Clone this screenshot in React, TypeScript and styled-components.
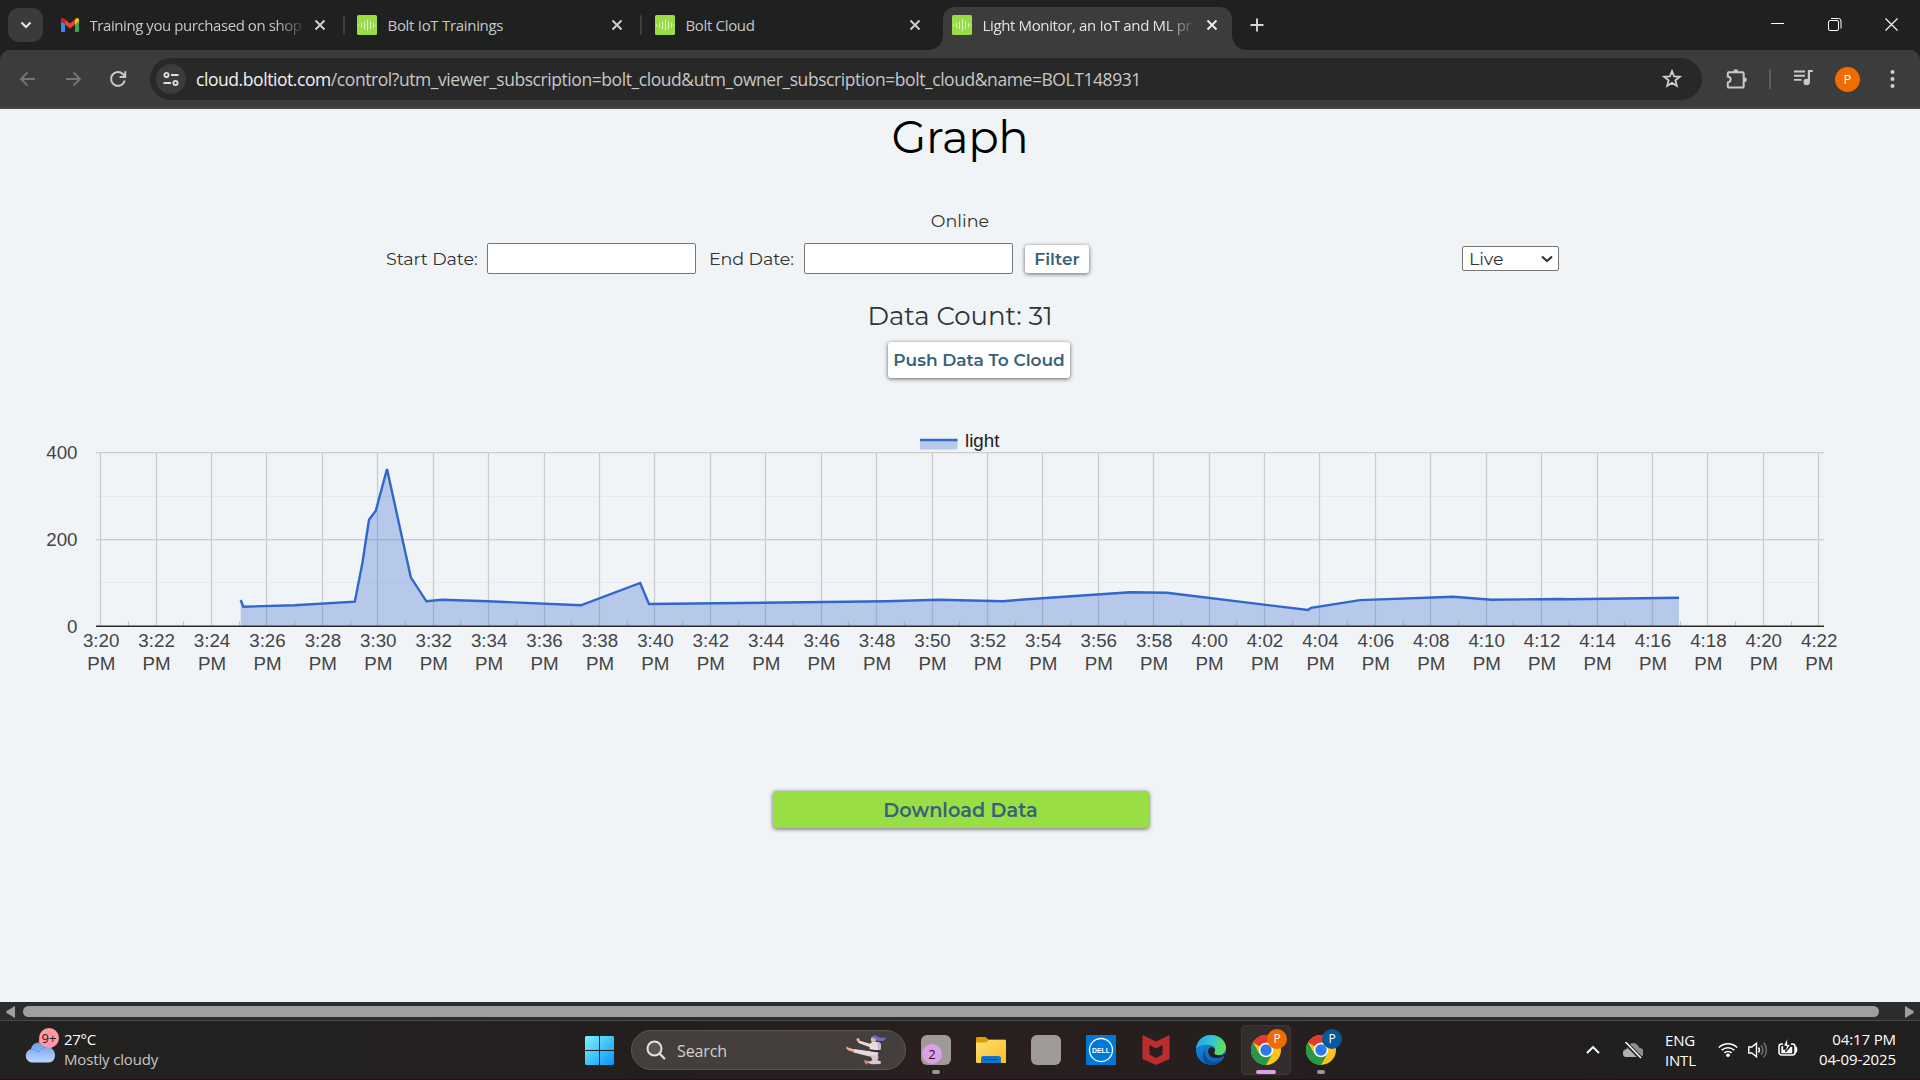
import React from "react";
import styled, { createGlobalStyle, css } from "styled-components";

const Global = createGlobalStyle`
  * { box-sizing: border-box; }
  html, body { margin: 0; padding: 0; background: #f0f4f7; overflow: hidden; }
  button, input { font-family: inherit; }
`;

const uiFont = `"Segoe UI", "Open Sans", "Noto Sans", sans-serif`;
const pageFont = `Montserrat, Inter, "Liberation Sans", sans-serif`;

const Screen = styled.div`
  width: 1920px;
  height: 1080px;
  display: flex;
  flex-direction: column;
  overflow: hidden;
  font-family: ${uiFont};
`;

/* ---------- browser tabs ---------- */
const TabStrip = styled.div`
  height: 50px;
  flex: none;
  display: flex;
  background: #1f2120;
  padding-left: 8px;
`;
const TabSearch = styled.button`
  width: 35px;
  height: 34px;
  margin-top: 8px;
  padding: 0;
  border: 0;
  border-radius: 11px;
  background: #3b3b3b;
  display: grid;
  place-items: center;
`;
const Tab = styled.div<{ $w: number; $pad?: number; $active?: boolean }>`
  position: relative;
  width: ${(p) => p.$w}px;
  height: 43px;
  margin-top: 7px;
  padding-left: ${(p) => p.$pad ?? 0}px;
  display: flex;
  align-items: center;
  padding-bottom: 7px;
  color: ${(p) => (p.$active ? "#e3e3e3" : "#c7c7c7")};
  ${(p) =>
    p.$active &&
    css`
      margin-left: 22px;
      padding-right: 14px;
      background: #3c3c3c;
      border-radius: 12px 12px 0 0;
      &::before,
      &::after {
        content: "";
        position: absolute;
        bottom: 0;
        width: 14px;
        height: 14px;
      }
      &::before {
        left: -14px;
        background: radial-gradient(circle at 0 0, transparent 13.5px, #3c3c3c 14px);
      }
      &::after {
        right: -14px;
        background: radial-gradient(circle at 100% 0, transparent 13.5px, #3c3c3c 14px);
      }
    `}
`;
const TabTitle = styled.span<{ $ls: number; $fade?: boolean }>`
  min-width: 209px;
  margin-left: 10.5px;
  white-space: nowrap;
  font-size: 15px;
  line-height: 20px;
  letter-spacing: ${(p) => p.$ls}px;
  ${(p) =>
    p.$fade &&
    css`
      mask-image: linear-gradient(90deg, #000 calc(100% - 26px), rgba(0, 0, 0, 0.15));
    `}
`;
const TabClose = styled.span`
  margin-left: auto;
  width: 12px;
  height: 12px;
  display: grid;
`;
const TabDivider = styled.span<{ $l: number; $r: number }>`
  width: 2px;
  height: 20px;
  margin: 15px ${(p) => p.$r}px 0 ${(p) => p.$l}px;
  border-radius: 1px;
  background: #3e3f3f;
`;
const NewTab = styled.span`
  display: flex;
  margin: 18px 0 0 18px;
  height: 14px;
`;
const WindowControls = styled.div`
  margin-left: auto;
  padding: 18px 22px 0 0;
  display: flex;
  gap: 43.5px;
`;

/* ---------- toolbar ---------- */
const ToolbarBack = styled.div`
  height: 59px;
  flex: none;
  background: #1f2120;
`;
const Toolbar = styled.div`
  height: 59px;
  background: #3c3c3c;
  border-radius: 10px 10px 0 0;
  border-bottom: 2px solid #484948;
  padding-top: 8px;
  display: flex;
`;
const NavButtons = styled.div`
  width: 150px;
  height: 42px;
  padding-left: 16.5px;
  display: flex;
  align-items: center;
  gap: 23px;
`;
const Omnibox = styled.div`
  width: 1552px;
  height: 42px;
  border-radius: 21px;
  background: #282828;
  display: flex;
  align-items: center;
  padding: 0 20px 0 6px;
`;
const SiteInfo = styled.span`
  width: 30px;
  height: 30px;
  border-radius: 50%;
  background: #3c3c3c;
  display: grid;
  place-items: center;
`;
const Url = styled.span`
  flex: 1;
  margin-left: 10px;
  font-size: 17.5px;
  line-height: 24px;
  letter-spacing: -0.43px;
  white-space: nowrap;
  color: #c7c7c7;
`;
const UrlHost = styled.span`
  color: #f1f1f1;
`;
const ToolbarRight = styled.div`
  flex: 1;
  height: 42px;
  padding-left: 24px;
  display: flex;
  align-items: center;
`;
const ToolDivider = styled.span`
  width: 2px;
  height: 20px;
  margin: 0 23px 0 21px;
  background: #5f5f5f;
`;
const Avatar = styled.span`
  width: 25px;
  height: 25px;
  margin: 0 30px 0 21px;
  border-radius: 50%;
  background: #ef6c00;
  color: #fff;
  font-size: 13px;
  line-height: 25px;
  text-align: center;
`;

/* ---------- page ---------- */
const Page = styled.main`
  height: 893px;
  flex: none;
  background: #f0f4f7;
  display: flex;
  flex-direction: column;
  align-items: center;
  font-family: ${pageFont};
  color: #333;
`;
const Title = styled.h1`
  margin: 0;
  height: 56px;
  font-size: 45px;
  line-height: 56px;
  font-weight: 400;
  letter-spacing: -0.3px;
  color: #000;
`;
const Status = styled.div`
  margin-top: 46px;
  height: 20px;
  font-size: 17.5px;
  line-height: 20px;
`;
const FilterRow = styled.div`
  width: 100%;
  height: 31px;
  margin-top: 12px;
  padding-left: 386px;
  display: flex;
  align-items: center;
`;
const DateLabel = styled.label<{ $w: number; $ml?: number }>`
  width: ${(p) => p.$w}px;
  margin-left: ${(p) => p.$ml ?? 0}px;
  font-size: 17.5px;
  letter-spacing: -0.1px;
  white-space: nowrap;
`;
const DateInput = styled.input`
  width: 209px;
  height: 31px;
  padding: 0 4px;
  border: 1.25px solid #767676;
  border-radius: 2px;
  background: #fff;
`;
const Raised = styled.button`
  padding: 0;
  border: 0;
  border-radius: 3px;
  background: #fff;
  color: #37637a;
  font-size: 17px;
  font-weight: 600;
  white-space: nowrap;
  box-shadow: 0 1px 4px rgba(0, 0, 0, 0.6);
`;
const FilterButton = styled(Raised)`
  width: 64px;
  height: 28px;
  margin-left: 12px;
`;
const ModeSelect = styled.div`
  width: 97px;
  height: 25px;
  margin-left: 373px;
  padding: 0 5px 0 6px;
  border: 1.25px solid #767676;
  border-radius: 2px;
  background: #fff;
  display: flex;
  align-items: center;
  justify-content: space-between;
  font-size: 17.5px;
  letter-spacing: -0.1px;
`;
const Count = styled.div`
  margin-top: 27px;
  height: 30px;
  font-size: 26px;
  line-height: 30px;
`;
const PushButton = styled(Raised)`
  width: 182px;
  height: 36px;
  margin: 11px 0 0 38px;
`;
const ChartSvg = styled.svg`
  width: 1920px;
  height: 270px;
  margin-top: 42px;
  flex: none;
  display: block;
  font-family: "Liberation Sans", Arial, sans-serif;
  font-size: 18.75px;
  fill: #444;
`;
const DownloadButton = styled(Raised)`
  width: 376px;
  height: 37px;
  margin: 101px 0 0 1px;
  background: #9ade46;
  font-size: 19.3px;
`;

/* ---------- scrollbar ---------- */
const ScrollBar = styled.div`
  height: 19px;
  flex: none;
  background: #2c2c2c;
  border-bottom: 1px solid #464646;
  display: flex;
  align-items: center;
  gap: 8px;
  padding: 1px 6px 0;
`;
const Thumb = styled.div`
  width: 1856px;
  height: 11px;
  margin-right: 18px;
  border-radius: 6px;
  background: #9f9f9f;
`;

/* ---------- taskbar ---------- */
const TaskBar = styled.footer`
  height: 59px;
  flex: none;
  display: flex;
  background: linear-gradient(90deg, #232221 0%, #242120 25%, #231f1f 33%, #291f1e 50%, #231f1e 72%, #201f20 100%);
  border-bottom: 1px solid #251018;
  color: #fff;
`;
const Weather = styled.div`
  width: 585px;
  padding: 4px 0 0 25px;
  display: flex;
  gap: 4px;
`;
const WeatherText = styled.div`
  padding-top: 4px;
  font-size: 15px;
  line-height: 20px;
  letter-spacing: -0.3px;
`;
const Dim = styled.div`
  color: #c8c6c4;
  letter-spacing: -0.15px;
`;
const StartButton = styled.div`
  width: 46px;
  padding-top: 15px;
`;
const SearchBox = styled.div`
  width: 275px;
  height: 40px;
  margin-top: 9px;
  padding: 0 17px 0 14px;
  border: 1px solid #5a5552;
  border-radius: 20px;
  background: #443f3d;
  display: flex;
  align-items: center;
  font-size: 16px;
  letter-spacing: -0.1px;
  color: #d4d0ce;
`;
const SearchLabel = styled.span`
  flex: 1;
  margin-left: 11px;
  padding-top: 1px;
`;
const Apps = styled.div`
  display: flex;
  gap: 5px;
  padding: 4px 0 0 5px;
`;
const AppCell = styled.div<{ $active?: boolean }>`
  position: relative;
  width: 50px;
  height: 50px;
  display: grid;
  place-items: center;
  border-radius: 5px;
  ${(p) =>
    p.$active &&
    css`
      background: #332e2d;
      box-shadow: inset 0 0 0 1px #3e3938;
    `}
`;
const Indicator = styled.span<{ $active?: boolean }>`
  position: absolute;
  bottom: 1px;
  left: ${(p) => (p.$active ? 15 : 21)}px;
  width: ${(p) => (p.$active ? 20 : 8)}px;
  height: 4px;
  border-radius: 2px;
  background: ${(p) => (p.$active ? "#dba0e6" : "#9c9794")};
`;
const Badge = styled.span<{ $x: number; $y: number; $bg: string; $fg: string; $size?: number }>`
  position: absolute;
  left: ${(p) => p.$x}px;
  top: ${(p) => p.$y}px;
  width: 20px;
  height: 20px;
  border-radius: 50%;
  background: ${(p) => p.$bg};
  color: ${(p) => p.$fg};
  font-size: ${(p) => p.$size ?? 12}px;
  line-height: 20px;
  letter-spacing: 0;
  text-align: center;
`;
const WeatherIcon = styled.div`
  position: relative;
  width: 35px;
  height: 42px;
  padding-top: 9px;
`;
const BlankApp = styled.div`
  width: 30px;
  height: 30px;
  border-radius: 6px;
  background: #9e9a98;
`;
const Tray = styled.div`
  margin-left: auto;
  padding-right: 24px;
  display: flex;
  align-items: flex-start;
`;
const TrayIcon = styled.span<{ $mt: number; $mr: number }>`
  display: flex;
  margin: ${(p) => p.$mt}px ${(p) => p.$mr}px 0 0;
`;
const TrayText = styled.div<{ $w: number; $mt: number; $right?: boolean }>`
  width: ${(p) => p.$w}px;
  margin-top: ${(p) => p.$mt}px;
  font-size: 15px;
  line-height: 20px;
  letter-spacing: ${(p) => (p.$right ? -0.12 : -0.2)}px;
  white-space: nowrap;
  text-align: ${(p) => (p.$right ? "right" : "left")};
`;

/* ---------- drawings ---------- */
const Cross = ({ color = "#d0d0d0" }: { color?: string }) => (
  <svg width="12" height="12" viewBox="0 0 12 12">
    <path d="M1.5 1.5l9 9M10.5 1.5l-9 9" stroke={color} strokeWidth="1.9" />
  </svg>
);

const BoltIcon = () => (
  <svg width="20" height="20" viewBox="0 0 20 20">
    <rect width="20" height="20" rx="1.5" fill="#98dc46" />
    <path
      d="M1.5 9.500v1.500M4.500 8v4.500M7.500 6.500v7.500M10.500 4.500v11M13.500 6.500v7.500M16.500 8v4.500M18.800 9.500v1.500"
      stroke="#e4f7cc"
      strokeWidth="1"
    />
  </svg>
);

const GmailIcon = () => (
  <svg width="18" height="14" viewBox="0 0 18 14">
    <path d="M0 3v9.5C0 13.4.5 14 1.3 14H4V5z" fill="#4285f4" />
    <path d="M18 3v9.5c0 .9-.5 1.5-1.3 1.5H14V5z" fill="#34a853" />
    <path d="M14 1.4V6.5l4-3V2c0-1.8-1.9-2.5-3.2-1.4z" fill="#fbbc04" />
    <path d="M4 6.500V1.400l5 4 5-4v5.100l-5 3.900z" fill="#ea4335" />
    <path d="M0 2v1.500l4 3V1.400L3.200.6C1.900-.5 0 .2 0 2z" fill="#c5221f" />
  </svg>
);

const Arrow = ({ flip }: { flip?: boolean }) => (
  <svg width="22" height="22" viewBox="0 0 22 22">
    <path
      d={flip ? "M4 11h13.500M11.500 4.500L18 11l-6.500 6.500" : "M18 11H4.500M10.500 4.500L4 11l6.500 6.500"}
      fill="none"
      stroke="#757575"
      strokeWidth="1.8"
    />
  </svg>
);

const Reload = () => (
  <svg width="22" height="22" viewBox="0 0 22 22">
    <path d="M17.700 12.500A6.900 6.900 0 1 1 16 6.200l1.800 1.900" fill="none" stroke="#c9c9c9" strokeWidth="2" />
    <path d="M18.200 3.300v5.600h-5.600" fill="none" stroke="#c9c9c9" strokeWidth="2" />
  </svg>
);

const SiteControls = () => (
  <svg width="16" height="16" viewBox="0 0 16 16" fill="none" stroke="#dedede" strokeWidth="1.900">
    <circle cx="3.500" cy="4" r="2.100" />
    <path d="M8 4h7.500M.5 12H8" />
    <circle cx="12.500" cy="12" r="2.100" />
  </svg>
);

const Star = () => (
  <svg width="20" height="20" viewBox="0 0 20 20">
    <path
      d="M10 2.200l2.100 5.200 5.700.4-4.400 3.600 1.400 5.500-4.800-3-4.800 3 1.400-5.500L2.200 7.800l5.700-.4z"
      fill="none"
      stroke="#cfcfcf"
      strokeWidth="1.800"
    />
  </svg>
);

const Puzzle = () => (
  <svg width="22" height="22" viewBox="0 0 22 22">
    <path
      d="M3 4.200h13.500c.8 0 1.200.4 1.200 1.200v13c0 .8-.4 1.200-1.200 1.200H3c-.8 0-1.200-.4-1.200-1.200v-4c3.800-.6 3.800-5.200 0-5.800V5.400c0-.8.4-1.200 1.200-1.200z"
      fill="none"
      stroke="#c9c9c9"
      strokeWidth="2"
    />
    <path d="M7.300 4a2.500 2.800 0 0 1 5 0zM18 9.200a2.800 2.500 0 0 1 0 5z" fill="#c9c9c9" />
  </svg>
);

const Queue = () => (
  <svg width="20" height="18" viewBox="0 0 20 18">
    <path d="M0 1.500h11M0 5.700h11M0 9.900h7.500" stroke="#c9c9c9" strokeWidth="1.900" />
    <path d="M18.800 1h-3.900v10" fill="none" stroke="#c9c9c9" strokeWidth="2.200" />
    <circle cx="12.700" cy="12" r="3.200" fill="#c9c9c9" />
  </svg>
);

const Kebab = () => (
  <svg width="5" height="20" viewBox="0 0 5 20" fill="#d0d0d0">
    <circle cx="2.500" cy="3" r="2" />
    <circle cx="2.500" cy="10" r="2" />
    <circle cx="2.500" cy="17" r="2" />
  </svg>
);

const WindowsLogo = () => (
  <svg width="29" height="29" viewBox="0 0 29 29">
    <defs>
      <linearGradient id="win" x1="0" y1="0" x2="1" y2="1">
        <stop offset="0" stopColor="#7df3fb" />
        <stop offset="1" stopColor="#0794fa" />
      </linearGradient>
    </defs>
    <path d="M1 0h13v14H0V1zM15 0h13l1 1v13H15zM0 15h14v14H1l-1-1zM15 15h14v13l-1 1H15z" fill="url(#win)" />
  </svg>
);

const Magnifier = () => (
  <svg width="20" height="20" viewBox="0 0 20 20">
    <circle cx="8.500" cy="8.500" r="7" fill="#5b5654" stroke="#e3e1e0" strokeWidth="2" />
    <path d="M13.800 13.800l4.500 4.700" stroke="#e3e1e0" strokeWidth="2.300" strokeLinecap="round" />
  </svg>
);

const KarateFigure = () => (
  <svg width="42" height="30" viewBox="0 0 42 30">
    <path d="M13 5.500l11 3.200 2-1.700 7 0 2 3.500-1 4.500-10 .500-.5-3.500-11-4z" fill="#e9dde0" />
    <path d="M10 4.500l2.500-1.800 1.500 2.500-1.500 2.500z" fill="#eeb08a" />
    <path d="M31 7l4 1.500 0 6-3 .5z" fill="#c8b8bf" />
    <path d="M24 15.500l9 1-1.500 4.500-8 .500-16-4 .5-3.500 14 2z" fill="#e6d8dc" />
    <path d="M24 20l8 .5.500 3-1.500 1.500 4 1.500-.5 2.500-9 .300-5-2 6-2z" fill="#d9c7cc" />
    <path d="M8 14.200l-6-1.700-1.800-1.200.3 2.500L3 15.800l5 1.200z" fill="#eeb08a" />
    <path d="M17.500 25.200l5 .6-1 3-1.500.6z" fill="#d98b73" />
    <path d="M23.500 14.300l11 1.500v1.900l-11-1.500z" fill="#2e2a38" />
    <circle cx="27.500" cy="4.500" r="2.700" fill="#efb48f" />
    <path d="M25.500 2.500c1-2.700 5-2.700 6.500-.4 3 1.500 6.500-.2 9.500 1-2.500.2-2 1.500-3.500 1.700 1 .6-1.500 1.700-3.500 1.100-3 .3-4.500-.6-6-2.600z" fill="#6a6fd0" />
  </svg>
);

const Folder = () => (
  <svg width="30" height="28" viewBox="0 0 30 28">
    <defs>
      <linearGradient id="fold" x1="0" y1="0" x2="1" y2="1">
        <stop offset="0" stopColor="#ffe07a" />
        <stop offset="1" stopColor="#fbbd1a" />
      </linearGradient>
    </defs>
    <path d="M0 2.500C0 1.500.6 1 1.500 1h8l3 2.500h16c1 0 1.500.6 1.500 1.500v8H0z" fill="#dd9d04" />
    <path d="M0 6.500h10l3-2.500h15.500c1 0 1.500.6 1.500 1.500V27H1.500C.6 27 0 26.500 0 25.500z" fill="url(#fold)" />
    <path d="M5 27v-4.500C5 21 6 20 7.500 20h15c1.500 0 2.500 1 2.500 2.500V27z" fill="#0f76cc" />
    <path d="M8.500 23.500h13" stroke="#0a4c8c" strokeWidth="1.200" />
  </svg>
);

const Dell = () => (
  <svg width="30" height="30" viewBox="0 0 30 30">
    <rect width="30" height="30" fill="#0078d6" />
    <circle cx="15" cy="15" r="11.500" fill="none" stroke="#fff" strokeWidth="1.300" />
    <text x="15" y="17.800" textAnchor="middle" fontFamily="Liberation Sans, sans-serif" fontWeight="700" fontSize="7.500" fill="#fff" textLength="18" lengthAdjust="spacingAndGlyphs">
      DELL
    </text>
  </svg>
);

const McAfee = () => (
  <svg width="28" height="30" viewBox="0 0 28 30">
    <path d="M.5 0L14 6.500 27.500 0v24L14 30 .5 24zM7.500 10v9.500L14 23l6.500-3.500V10L14 13.500z" fill="#bd2d2c" fillRule="evenodd" />
  </svg>
);

const Edge = () => (
  <svg width="30" height="30" viewBox="0 0 30 30">
    <defs>
      <linearGradient id="edgeTop" x1="0" y1="0.300" x2="1" y2="0.600">
        <stop offset="0" stopColor="#2aa4e4" />
        <stop offset=".5" stopColor="#35c4d2" />
        <stop offset="1" stopColor="#6ee24c" />
      </linearGradient>
      <linearGradient id="edgeLow" x1="0" y1="0" x2="0.600" y2="1">
        <stop offset="0" stopColor="#1595e0" />
        <stop offset="1" stopColor="#0a60bd" />
      </linearGradient>
    </defs>
    <circle cx="15" cy="15" r="15" fill="url(#edgeLow)" />
    <path d="M0 14C.8 5.500 7 0 15 0c8.500 0 15 6 15 12.500 0 4.500-3.500 7.500-7.500 7.500-3 0-4.500-1.200-4-2.200 1.500-2 1.200-6.800-4.500-7.800C7 9 1.500 11 0 14z" fill="url(#edgeTop)" />
    <path d="M10 14.500c-2 5 .5 12.500 9.500 12.500 3 0 5.500-1 8-3.500C24.500 28 20 30 15 30 9 29.500 6 24 7 19.500c.5-2.500 1.500-4 3-5z" fill="#114e91" />
    <path d="M13 13.500c-2.500 3.500 0 9.500 7 9.500 3.500 0 6-1 8.500-2.200l-.8 3.200 3-1V19l-3 .500c-1.500.8-3.500 1-5.200.7-3-.2-4.500-1.400-4-2.400.8-1.200 1-2.600.500-4-1.500-2-4.500-2-6-.3z" fill="#241f1e" />
    <path d="M18.300 17.600C18 19 20 20.200 22.500 20.200 26.500 20.200 30 17 30 13l-5-4-6.500 4.500c.7 1.500.5 2.800-.2 4.100z" fill="#58da70" opacity=".55" />
  </svg>
);

const Chrome = () => (
  <svg width="30" height="30" viewBox="0 0 30 30">
    <circle cx="15" cy="15" r="15" fill="#fcc31e" />
    <path d="M15 15L2 7.500A15 15 0 0 1 28 7.500H15z" fill="#e23a2e" />
    <path d="M2 7.500A15 15 0 0 0 15 30l6.500-11.300L15 15 8.500 18.700z" fill="#279847" />
    <circle cx="15" cy="15" r="7.300" fill="#fff" />
    <circle cx="15" cy="15" r="5.700" fill="#2f78ea" />
  </svg>
);

const CloudGlyph = () => (
  <svg width="31" height="29" viewBox="0 0 31 29" display="block">
    <defs>
      <linearGradient id="cl" x1="0" y1="0" x2="0" y2="1">
        <stop offset="0" stopColor="#6d9be8" />
        <stop offset="1" stopColor="#bcd8ff" />
      </linearGradient>
    </defs>
    <circle cx="21" cy="9" r="7.500" fill="#f08a1c" />
    <path d="M7 28.500a6.800 6.800 0 0 1-1-13.400C7 10.500 10 8.800 13.500 8.800c4 0 6.500 2 7.500 5 5-1.500 9 2.500 9 7.200 0 4.500-2.500 7.500-6.500 7.500z" fill="url(#cl)" />
    <path d="M6 15.300c3-.8 6 .5 7.500 3 1.500-3.500 4-4.500 7.500-4.500" fill="none" stroke="#5f8fe0" strokeWidth="1" />
  </svg>
);

/* ---------- chart ---------- */
const X0 = 100.7;
const STEP = 55.42;
const BASE = 206.5;
const samples: [number, number][] = [
  [240.7, 180], [243.3, 186.7], [294.6, 185.3], [354.8, 181.7], [362.4, 143], [369, 99.7],
  [375.8, 90.7], [387, 49], [410.8, 157.3], [426.4, 181.3], [442, 179.7], [488, 181.3],
  [580.8, 185.3], [640.2, 163], [649, 184], [887, 181.3], [938, 179.7], [1003, 181.3],
  [1023.7, 179.5], [1130, 172.2], [1167, 172.8], [1308, 190], [1311, 187.8], [1360, 180.1],
  [1453, 176.7], [1491.5, 179.8], [1559, 179], [1569, 179.3], [1679, 177.7],
];
const line = samples.map(([x, y], i) => `${i ? "L" : "M"}${x} ${y}`).join("");
const ticks = Array.from({ length: 32 }, (_, i) => {
  const m = 20 + i * 2;
  return { x: X0 + i * STEP, label: `${m < 60 ? 3 : 4}:${String(m % 60).padStart(2, "0")}` };
});
const snap = (v: number) => Math.floor(v) + 0.5;

const LightChart = () => (
  <ChartSvg viewBox="0 0 1920 270">
    <path d="M96 76.500H1824M96 162.500H1824" stroke="#e7eaec" strokeWidth="1.200" />
    {ticks.slice(0, -1).map((t) => (
      <path key={t.label} d={`M${snap(t.x + STEP / 2)} 201V206`} stroke="#ccc" strokeWidth="1.200" />
    ))}
    <path d="M96 32.500H1824M96 119.500H1824" stroke="#ccc" strokeWidth="1.250" />
    {ticks.map((t) => (
      <path key={t.label} d={`M${snap(t.x)} 32.500V206`} stroke="#ccc" strokeWidth="1.250" />
    ))}
    <path d={`${line}L1679 ${BASE}L240.700 ${BASE}Z`} fill="#3366cc" fillOpacity="0.3" />
    <path d={`M96 ${BASE - 0.2}H1824`} stroke="#2b2b2b" strokeWidth="1.500" />
    <path d={line} fill="none" stroke="#3366cc" strokeWidth="2.400" />
    <rect x="920" y="19" width="37.500" height="10.500" fill="#3366cc" fillOpacity="0.300" />
    <path d="M920 20H957.500" stroke="#3366cc" strokeWidth="2.500" />
    <text x="965" y="26.500" fill="#222">light</text>
    <text x="77.500" y="38.500" textAnchor="end">400</text>
    <text x="77.500" y="125.500" textAnchor="end">200</text>
    <text x="77.500" y="212.500" textAnchor="end">0</text>
    {ticks.map((t) => (
      <text key={t.label} textAnchor="middle" y="226.500">
        <tspan x={t.x + 0.5}>{t.label}</tspan>
        <tspan x={t.x + 0.5} dy="23">PM</tspan>
      </text>
    ))}
  </ChartSvg>
);

export default function App() {
  return (
    <Screen>
      <Global />
      <TabStrip>
        <TabSearch>
          <svg width="12" height="8" viewBox="0 0 12 8">
            <path d="M1.500 1.500L6 6l4.500-4.500" fill="none" stroke="#e3e3e3" strokeWidth="2.200" />
          </svg>
        </TabSearch>
        <Tab $w={283} $pad={18}>
          <GmailIcon />
          <TabTitle $ls={-0.43} $fade>Training you purchased on shop</TabTitle>
          <TabClose><Cross /></TabClose>
        </Tab>
        <TabDivider $l={17} $r={12} />
        <Tab $w={266}>
          <BoltIcon />
          <TabTitle $ls={-0.3}>Bolt IoT Trainings</TabTitle>
          <TabClose><Cross /></TabClose>
        </Tab>
        <TabDivider $l={17} $r={13} />
        <Tab $w={266}>
          <BoltIcon />
          <TabTitle $ls={-0.33}>Bolt Cloud</TabTitle>
          <TabClose><Cross /></TabClose>
        </Tab>
        <Tab $w={289} $pad={9} $active>
          <BoltIcon />
          <TabTitle $ls={-0.36} $fade>Light Monitor, an IoT and ML pr</TabTitle>
          <TabClose><Cross color="#ececec" /></TabClose>
        </Tab>
        <NewTab>
          <svg width="14" height="14" viewBox="0 0 14 14">
            <path d="M7 .5v13M.5 7h13" stroke="#d5d5d5" strokeWidth="1.900" />
          </svg>
        </NewTab>
        <WindowControls>
          <svg width="13" height="13" viewBox="0 0 13 13"><path d="M0 5.500h13" stroke="#fff" /></svg>
          <svg width="14" height="13" viewBox="0 0 14 13" fill="none" stroke="#fff">
            <rect x=".5" y="2.500" width="10" height="10" rx="1.500" />
            <path d="M3 .5h7.500a2.500 2.500 0 0 1 2.500 2.500v7.500" />
          </svg>
          <svg width="13" height="13" viewBox="0 0 13 13"><path d="M.5.5l12 12M12.500.5l-12 12" stroke="#fff" strokeWidth="1.100" /></svg>
        </WindowControls>
      </TabStrip>

      <ToolbarBack>
        <Toolbar>
          <NavButtons>
            <Arrow />
            <Arrow flip />
            <Reload />
          </NavButtons>
          <Omnibox>
            <SiteInfo><SiteControls /></SiteInfo>
            <Url>
              <UrlHost>cloud.boltiot.com</UrlHost>
              /control?utm_viewer_subscription=bolt_cloud&amp;utm_owner_subscription=bolt_cloud&amp;name=BOLT148931
            </Url>
            <Star />
          </Omnibox>
          <ToolbarRight>
            <Puzzle />
            <ToolDivider />
            <Queue />
            <Avatar>P</Avatar>
            <Kebab />
          </ToolbarRight>
        </Toolbar>
      </ToolbarBack>

      <Page>
        <Title>Graph</Title>
        <Status>Online</Status>
        <FilterRow>
          <DateLabel $w={101}>Start Date:</DateLabel>
          <DateInput />
          <DateLabel $w={95} $ml={13}>End Date:</DateLabel>
          <DateInput />
          <FilterButton>Filter</FilterButton>
          <ModeSelect>
            Live
            <svg width="12" height="8" viewBox="0 0 12 8">
              <path d="M1 1.500l5 4.500 5-4.500" fill="none" stroke="#333" strokeWidth="2.200" />
            </svg>
          </ModeSelect>
        </FilterRow>
        <Count>Data Count: 31</Count>
        <PushButton>Push Data To Cloud</PushButton>
        <LightChart />
        <DownloadButton>Download Data</DownloadButton>
      </Page>

      <ScrollBar>
        <svg width="9" height="12" viewBox="0 0 9 12"><path d="M9 0v12L1 7.300Q-.5 6 1 4.700z" fill="#9f9f9f" /></svg>
        <Thumb />
        <svg width="9" height="12" viewBox="0 0 9 12"><path d="M0 0v12l8-4.700Q9.500 6 8 4.700z" fill="#9f9f9f" /></svg>
      </ScrollBar>

      <TaskBar>
        <Weather>
          <WeatherIcon>
            <CloudGlyph />
            <Badge $x={14} $y={3} $bg="#ff99a4" $fg="#1a1a1a" $size={13}>9+</Badge>
          </WeatherIcon>
          <WeatherText>
            27°C
            <Dim>Mostly cloudy</Dim>
          </WeatherText>
        </Weather>
        <StartButton><WindowsLogo /></StartButton>
        <SearchBox>
          <Magnifier />
          <SearchLabel>Search</SearchLabel>
          <KarateFigure />
        </SearchBox>
        <Apps>
          <AppCell>
            <BlankApp />
            <Badge $x={11} $y={19} $bg="#dba0e6" $fg="#1a1a1a" $size={13}>2</Badge>
            <Indicator />
          </AppCell>
          <AppCell><Folder /></AppCell>
          <AppCell><BlankApp /></AppCell>
          <AppCell><Dell /></AppCell>
          <AppCell><McAfee /></AppCell>
          <AppCell><Edge /></AppCell>
          <AppCell $active>
            <Chrome />
            <Badge $x={26} $y={4} $bg="#ef6c00" $fg="#fff">P</Badge>
            <Indicator $active />
          </AppCell>
          <AppCell>
            <Chrome />
            <Badge $x={26} $y={4} $bg="#055a9e" $fg="#fff">P</Badge>
            <Indicator />
          </AppCell>
        </Apps>
        <Tray>
          <TrayIcon $mt={24} $mr={23}>
            <svg width="14" height="9" viewBox="0 0 14 9"><path d="M1 8l6-6 6 6" fill="none" stroke="#fff" strokeWidth="1.900" /></svg>
          </TrayIcon>
          <TrayIcon $mt={21} $mr={22}>
            <svg width="20" height="17" viewBox="0 0 20 17">
              <path d="M4 15a4 4 0 0 1-.5-8C4.500 3 7 1 10 1s5.500 2 6.500 5a4.500 4.500 0 0 1 0 9z" fill="#8f8d8c" />
              <path d="M0 11c2-4.500 8-5 12-1l6 4.500-2 .5H4a4 4 0 0 1-4-4z" fill="#b3b1b0" />
              <path d="M2 0l16 16.500" stroke="#242120" strokeWidth="4" />
              <path d="M2.500 0l15.500 16" stroke="#fff" strokeWidth="1.500" />
            </svg>
          </TrayIcon>
          <TrayText $w={53} $mt={9}>ENG<br />INTL</TrayText>
          <TrayIcon $mt={20} $mr={10}>
            <svg width="20" height="17" viewBox="0 0 20 17" fill="none" stroke="#fff" strokeWidth="1.500">
              <path d="M.8 6.500a13 13 0 0 1 18.400 0M3.600 9.300a9 9 0 0 1 12.800 0M6.300 12a5.200 5.200 0 0 1 7.400 0" />
              <circle cx="10" cy="14.300" r="1.800" fill="#fff" stroke="none" />
            </svg>
          </TrayIcon>
          <TrayIcon $mt={20} $mr={10}>
            <svg width="20" height="18" viewBox="0 0 20 18" fill="none" stroke="#fff" strokeWidth="1.400">
              <path d="M.8 6v6h3l4.700 3.800V2.200L3.800 6z" />
              <path d="M10.500 6.500a4 4 0 0 1 0 5" />
              <path d="M13 4.200a7 7 0 0 1 0 9.600M15.700 1.800a11 11 0 0 1 0 14.400" stroke="#777" />
            </svg>
          </TrayIcon>
          <TrayIcon $mt={17} $mr={0}>
            <svg width="20" height="19" viewBox="0 0 20 19" fill="none" stroke="#fff" strokeWidth="1.500">
              <path d="M5 6H3.500A2.500 2.500 0 0 0 1 8.500v6A2.500 2.500 0 0 0 3.500 17h11a2.500 2.500 0 0 0 2.500-2.500v-6A2.500 2.500 0 0 0 14.500 6H13M17.500 9c1.500.3 1.500 5 0 5.500" />
              <path d="M3.300 8.300h2l-.3 3.500h3.300l-.5 3 5-6h1.400v6.400H3.300z" fill="#fff" stroke="none" />
              <path d="M9.500 0L5.500 8h3l-1 6 5-7.500H9.500z" fill="#fff" stroke="#232020" strokeWidth=".8" />
            </svg>
          </TrayIcon>
          <TrayText $w={98} $mt={8} $right>04:17 PM<br />04-09-2025</TrayText>
        </Tray>
      </TaskBar>
    </Screen>
  );
}
